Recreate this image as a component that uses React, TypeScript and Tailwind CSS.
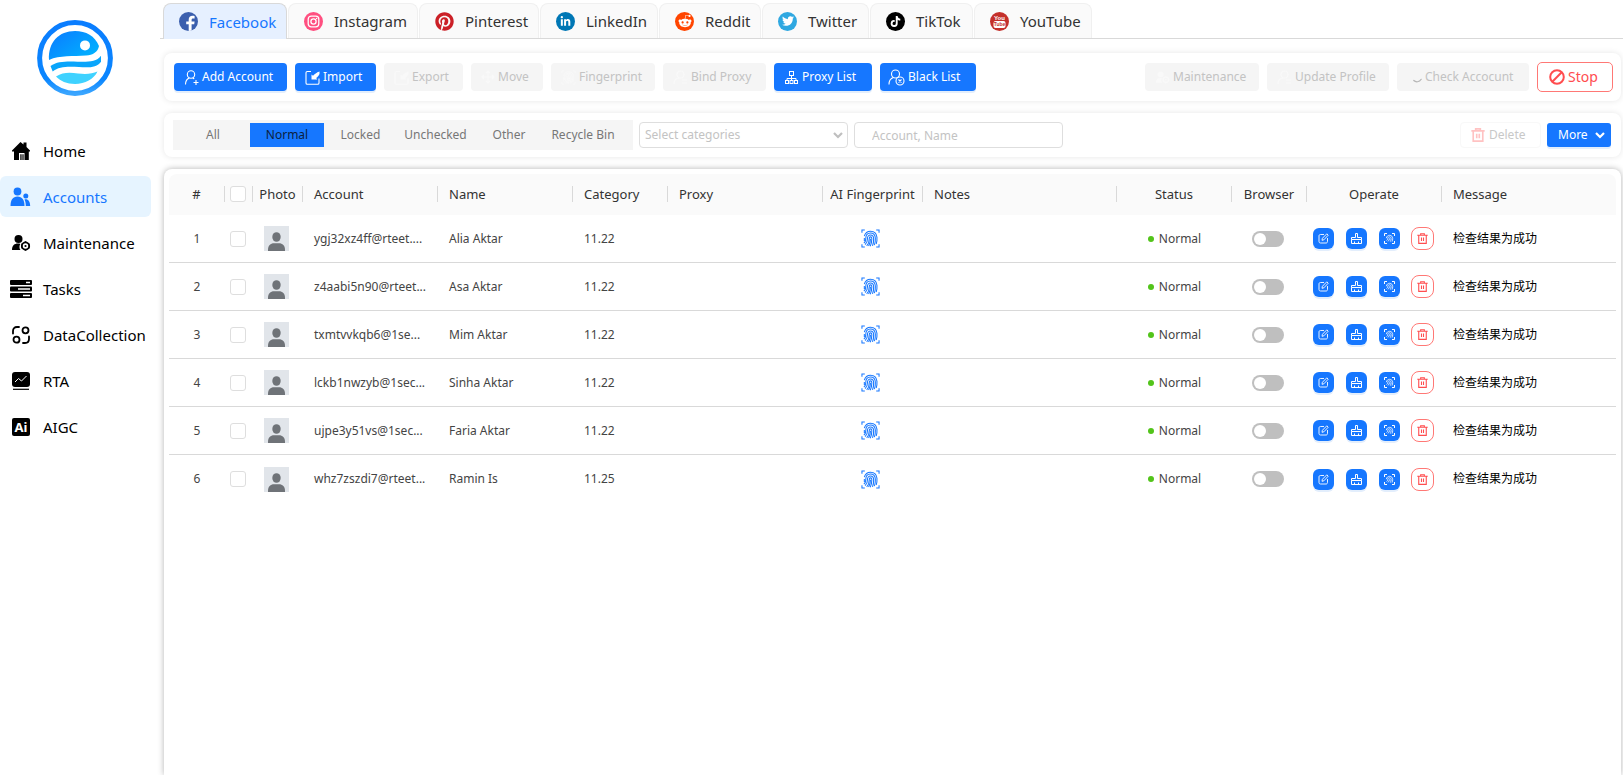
import type { ReactNode } from 'react'
import { FaLinkedinIn, FaPinterest, FaRedditAlien, FaTiktok, FaTwitter } from 'react-icons/fa'

/* ---------- icons ---------- */

function Logo() {
  return (
    <svg width="76" height="76" viewBox="0 0 76 76" aria-label="Logo">
      <defs>
        <linearGradient id="logo-ring" x1="0" y1="0" x2="0" y2="1">
          <stop offset="0" stopColor="#0a7dff" />
          <stop offset="0.8" stopColor="#0a86ff" />
          <stop offset="1" stopColor="#3aa5ff" />
        </linearGradient>
        <linearGradient id="logo-head" x1="0.1" y1="0.1" x2="1" y2="0.8">
          <stop offset="0" stopColor="#0a80ff" />
          <stop offset="1" stopColor="#00b4ff" />
        </linearGradient>
      </defs>
      <circle cx="38" cy="38" r="35.4" fill="#fff" stroke="url(#logo-ring)" strokeWidth="5" />
      <path d="M12 40C11 22 22 11 38 11c11 0 20 5 24 15-1 6-6 9-13 9.600-13 1.200-26-.6-37 4.400z" fill="url(#logo-head)" />
      <circle cx="48" cy="25.400" r="5" fill="#fff" />
      <path d="M13.500 46c7-5 17-4.500 27-4.300 10 .3 19 .3 23.500-6v6c-4 6-12 6-22 5.400-10-.6-20-1-26.300 4.400z" fill="#09a5fb" />
      <path d="M19 56.500c7-4.500 14-4 22-3 8 .8 14 .5 19.500-2C57 59 48 64 38 64c-8 0-15-3-19-7.500z" fill="#3fd2ff" />
    </svg>
  )
}

function HomeIcon() {
  return (
    <svg width="20" height="20" viewBox="0 0 20 20" fill="currentColor">
      <path d="M1 9.500 9.500 1l3 2.500V1.500h3v4.500l3.500 3.500v1h-1.200V19h-4.300v-7H8v7H3V10.500H1z" />
      <path d="M9.300 13.200h1.300V19H9.300zM11.400 13.200h1.200V19h-1.200z" />
    </svg>
  )
}

function AccountsIcon() {
  return (
    <svg width="21" height="20" viewBox="0 0 21 20" fill="currentColor">
      <circle cx="7.500" cy="4.500" r="3.900" />
      <path d="M.5 19c0-6 2.300-9.500 7-9.500s7 3.500 7 9.500z" />
      <circle cx="15.800" cy="9" r="2.500" />
      <path d="M14.500 12.500c3.500-.8 5.500 1.700 5.700 6.500h-4.400c0-2.500-.3-4.700-1.300-6.500z" />
    </svg>
  )
}

function MaintenanceIcon({ size = 20 }: { size?: number }) {
  return (
    <svg width={size} height={size} viewBox="0 0 20 20" fill="currentColor">
      <circle cx="7.500" cy="6" r="4" />
      <path d="M1 17c0-4.500 2.500-6.500 6-6.500 1 0 1.700.1 2.300.5-1.200 2-1.100 4.300.2 6z" />
      <path fillRule="evenodd" d="m14.500 8 2.300 1.200 2 1.600.3 2.200-.3 2.200-2 1.600-2.300 1.200-2.300-1.200-2-1.600-.3-2.200.3-2.200 2-1.600zm0 2.300a2.700 2.700 0 1 0 0 5.400 2.700 2.700 0 0 0 0-5.400z" />
      <circle cx="14.500" cy="13" r="1.100" />
    </svg>
  )
}

function TasksIcon() {
  return (
    <svg width="22" height="18" viewBox="0 0 22 18">
      <rect width="22" height="5" rx="1" y="0" />
      <rect width="22" height="5" rx="1" y="6.500" />
      <rect width="22" height="5" rx="1" y="13" />
      <path d="M16 2.500h4M8 9h12M13 15.500h7" stroke="#fff" strokeWidth="1.400" />
    </svg>
  )
}

function CollectionIcon() {
  return (
    <svg width="20" height="20" viewBox="0 0 20 20" fill="none" stroke="currentColor" strokeWidth="1.800">
      <circle cx="14.500" cy="5.300" r="3" />
      <circle cx="5.500" cy="14.700" r="3" />
      <path d="M2 8.500V6c0-2.500 1.500-4 4-4h2M18 11.500V14c0 2.500-1.500 4-4 4h-2" strokeLinecap="round" />
    </svg>
  )
}

function RtaIcon() {
  return (
    <svg width="20" height="20" viewBox="0 0 20 20">
      <rect x="1" y="1" width="18" height="15" rx="3" />
      <path d="M2 18.300h16" stroke="#000" strokeWidth="1.200" />
      <path d="m4 11 3.500-3.500L10.500 10l5-5" fill="none" stroke="#fff" strokeWidth="1" />
    </svg>
  )
}

function AigcIcon() {
  return (
    <svg width="18" height="18" viewBox="0 0 18 18">
      <rect width="18" height="18" rx="2" />
      <text x="9" y="14" textAnchor="middle" fontSize="13" fontWeight="700" fill="#fff" fontFamily="Noto Sans, sans-serif">Ai</text>
    </svg>
  )
}

function FacebookLogo() {
  return (
    <svg width="19" height="19" viewBox="0 0 19 19">
      <circle cx="9.500" cy="9.500" r="9.500" fill="#3b5fae" />
      <path d="M9.700 18.900v-6.700H7.200V9.600h2.500V7.700c0-2.700 1.500-4 3.800-4 1 0 1.900.1 2.100.2v2.500h-1.500c-1.200 0-1.500.6-1.500 1.500v1.700h3l-.4 2.600h-2.600v6.100c-.9.400-1.900.6-2.900.6z" fill="#fff" />
    </svg>
  )
}

function InstagramLogo() {
  return (
    <svg width="19" height="19" viewBox="0 0 19 19" fill="none" stroke="#fff" strokeWidth="1.300">
      <circle cx="9.500" cy="9.500" r="9.500" fill="#ff4f80" stroke="none" />
      <rect x="4.200" y="4.200" width="10.600" height="10.600" rx="3" />
      <circle cx="9.500" cy="9.500" r="2.600" />
      <circle cx="12.600" cy="6.400" r=".7" fill="#fff" stroke="none" />
    </svg>
  )
}

function YoutubeLogo() {
  return (
    <svg width="19" height="19" viewBox="0 0 19 19" fontFamily="Liberation Sans, sans-serif" fontWeight="700" textAnchor="middle">
      <circle cx="9.500" cy="9.500" r="9.500" fill="#c4302b" />
      <text x="9.500" y="8" fontSize="6" fill="#fff">You</text>
      <rect x="3.500" y="9" width="12" height="7" rx="2" fill="#fff" />
      <text x="9.500" y="14.300" fontSize="5" fill="#c4302b">Tube</text>
    </svg>
  )
}

function Disc({ className, children }: { className: string; children: ReactNode }) {
  return <span className={`flex size-[19px] items-center justify-center rounded-full text-white ${className}`}>{children}</span>
}

function AddUserIcon() {
  return (
    <svg width="15" height="15" viewBox="0 0 15 15" fill="none" stroke="currentColor" strokeWidth="1.100">
      <circle cx="7" cy="4.500" r="3.700" />
      <path d="M1.500 14.500c0-3.500 1.500-5.700 3.800-6.600M8.800 7.900c.6.300 1 .6 1.400 1.100M9.500 12.500h5M12 10v5" />
    </svg>
  )
}

function BlockUserIcon() {
  return (
    <svg width="17" height="17" viewBox="0 0 17 17" fill="none" stroke="currentColor" strokeWidth="1.100">
      <circle cx="7.500" cy="5" r="4" />
      <path d="M1 15.500c0-4 1.700-6 4.300-6.900" />
      <circle cx="12" cy="12" r="4" />
      <path d="m10.500 10.500 3 3M13.500 10.500l-3 3" />
    </svg>
  )
}

function ImportIcon() {
  return (
    <svg width="15" height="15" viewBox="0 0 15 15" fill="none" stroke="currentColor" strokeWidth="1.100">
      <path d="M6 1.500H2.300C1.400 1.500 1 1.900 1 2.700V13c0 .8.400 1.300 1.300 1.300h10.400c.8 0 1.300-.5 1.300-1.300V8.500" />
      <path d="M6.500 9.500V4.500l1.500 1.300c1.500-1.600 3.600-3.300 6.500-4.300v2.500c-.8 1.700-2 3-3.300 4.100l1 1.400z" fill="currentColor" stroke="none" />
    </svg>
  )
}

function MoveIcon() {
  return (
    <svg width="14" height="14" viewBox="0 0 14 14" fill="none" stroke="currentColor" strokeWidth="1.200">
      <path d="M7 1v12M1 7h12M5 3l2-2 2 2M5 11l2 2 2-2M3 5 1 7l2 2M11 5l2 2-2 2" />
    </svg>
  )
}

function NetworkIcon() {
  return (
    <svg width="15" height="15" viewBox="0 0 15 15" fill="none" stroke="currentColor" strokeWidth="1">
      <rect x="5.500" y="1.500" width="4" height="4" />
      <rect x="1.500" y="10.500" width="3" height="3" />
      <rect x="6" y="10.500" width="3" height="3" />
      <rect x="10.500" y="10.500" width="3" height="3" />
      <path d="M7.500 5.500v5M3 10.500v-2h9v2" />
    </svg>
  )
}

function FingerprintIcon({ size = 20 }: { size?: number }) {
  return (
    <svg width={size} height={size} viewBox="0 0 20 20" fill="none" stroke="currentColor" strokeWidth="1.100">
      <path d="M1 4V1h3M16 1h3v3M19 16v3h-3M4 19H1v-3" />
      <path d="M3.500 7.500C4.500 4 7 2.300 10 2.300c4 0 6.500 2.700 6.800 6.500.2 3-.1 5.200-.8 7" />
      <path d="M3.500 9.500v3.200M3 14.800c1.200-.8 2-2.300 2-4.600C5 6.600 7 4.300 10 4.300s5 2.200 5.100 5.500c.1 3-.2 5.200-1 7.200" />
      <path d="M4.300 16.500c1.700-1.500 2.500-3.500 2.500-6.300C6.800 7.800 8 6.300 10 6.300s3.200 1.500 3.300 3.900c.1 3-.3 5.300-1.200 7.600" />
      <path d="M6 17.800c1.900-2 2.700-4.200 2.700-7.500 0-1.300.5-2 1.300-2s1.400.8 1.400 2c0 3.200-.5 5.400-1.700 7.900" />
      <path d="M10 10.200c0 3-.6 5.200-2 7.800" />
    </svg>
  )
}

function ScanIcon() {
  return (
    <svg width="13" height="13" viewBox="0 0 13 13" fill="none" stroke="currentColor">
      <path d="M1.500 4V1.500H4M9 1.500h2.500V4M11.500 9v2.500H9M4 11.500H1.500V9" />
      <path d="M3.300 6.200c.4-1.900 1.600-2.900 3.200-2.900 2 0 3.200 1.300 3.200 3.200 0 1.300-.2 2.300-.6 3.100M3.600 8.600c.8-.6 1.100-1.300 1.200-2.200.1-1 .7-1.600 1.700-1.600s1.600.7 1.600 1.800c0 1.200-.3 2.200-.8 3M5 9.400c.9-.8 1.400-1.700 1.500-3" strokeWidth=".8" />
    </svg>
  )
}

function BindIcon() {
  return (
    <svg width="15" height="15" viewBox="0 0 15 15" fill="none" stroke="currentColor" strokeWidth="1.200">
      <circle cx="7.500" cy="4.500" r="3.500" />
      <path d="M1 14c0-3.500 2-5.500 5-6M9 10h5M9 13h5" />
    </svg>
  )
}

function StopIcon() {
  return (
    <svg width="16" height="16" viewBox="0 0 16 16" fill="none" stroke="currentColor" strokeWidth="2">
      <circle cx="8" cy="8" r="6.800" />
      <path d="M3.300 12.700 12.700 3.300" />
    </svg>
  )
}

function SpinnerIcon() {
  return (
    <svg width="9" height="14" viewBox="0 0 9 14" fill="none" stroke="#b5b5b5" strokeWidth="1.200" strokeLinecap="round">
      <path d="M.8 10.500c2 2 5.500 1.800 7.400-1.200" />
    </svg>
  )
}

function TrashIcon({ size = 11, strokeWidth = 1.2 }: { size?: number; strokeWidth?: number }) {
  return (
    <svg width={size} height={size} viewBox="0 0 12 12" fill="none" stroke="currentColor" strokeWidth={strokeWidth}>
      <path d="M.3 2.500h11.400M4 2.200V.8h4v1.400M1.900 2.500v8.800h8.200V2.500M4.900 5v3.800M7.100 5v3.800" />
    </svg>
  )
}

function ChevronIcon() {
  return (
    <svg width="10" height="10" viewBox="0 0 10 10" fill="none" stroke="currentColor" strokeWidth="2.200">
      <path d="m1 3 4 4 4-4" />
    </svg>
  )
}

function EditIcon() {
  return (
    <svg width="11" height="11" viewBox="0 0 11 11" fill="none" stroke="currentColor" strokeWidth=".9">
      <path d="M6 1.500H2.600C1.500 1.500 1 2 1 3v5.400c0 1 .5 1.600 1.600 1.600H8c1 0 1.500-.6 1.500-1.600V5" />
      <path d="m4 7.300.4-2L8.800.8l1.400 1.400-4.300 4.600z" />
    </svg>
  )
}

function CleanIcon() {
  return (
    <svg width="13" height="13" viewBox="0 0 13 13" fill="none" stroke="currentColor" strokeWidth="1">
      <path d="M5.500 5.500v-4h2v4h4v2h-10v-2zM1.500 7.500v4h10v-4M4.500 11.500v-2M8.500 11.500v-2" />
    </svg>
  )
}

function Avatar() {
  return (
    <svg width="25" height="25" viewBox="0 0 25 25" role="img" aria-label="Profile photo">
      <rect width="25" height="25" fill="#e1e5ea" />
      <ellipse cx="12.500" cy="11" rx="4.200" ry="4.800" fill="#6f7378" />
      <path d="M4 25v-1.500c0-4 2.500-6.300 6-6.300h5c3.500 0 6 2.300 6 6.300V25z" fill="#6f7378" />
    </svg>
  )
}

/* ---------- data ---------- */

const navItems = [
  { label: 'Home', icon: <HomeIcon /> },
  { label: 'Accounts', icon: <AccountsIcon />, active: true },
  { label: 'Maintenance', icon: <MaintenanceIcon /> },
  { label: 'Tasks', icon: <TasksIcon /> },
  { label: 'DataCollection', icon: <CollectionIcon /> },
  { label: 'RTA', icon: <RtaIcon /> },
  { label: 'AIGC', icon: <AigcIcon /> }
]

const platforms = [
  { label: 'Facebook', width: 'w-[124px]', icon: <FacebookLogo />, active: true },
  { label: 'Instagram', width: 'w-[130px]', icon: <InstagramLogo /> },
  { label: 'Pinterest', width: 'w-[120px]', icon: <FaPinterest size={19} color="#cb2027" /> },
  { label: 'LinkedIn', width: 'w-[118px]', icon: <Disc className="bg-[#0077b5]"><FaLinkedinIn size={11} /></Disc> },
  { label: 'Reddit', width: 'w-[102px]', icon: <Disc className="bg-[#ff4500]"><FaRedditAlien size={14} /></Disc> },
  { label: 'Twitter', width: 'w-[107px]', icon: <Disc className="bg-[#2fa8e1]"><FaTwitter size={12} /></Disc> },
  { label: 'TikTok', width: 'w-[103px]', icon: <Disc className="bg-black"><FaTiktok size={11} /></Disc> },
  { label: 'YouTube', width: 'w-[118px]', icon: <YoutubeLogo /> }
]

const filters = [
  { label: 'All', width: 'w-[74px]' },
  { label: 'Normal', width: 'w-[74px]', active: true },
  { label: 'Locked', width: 'w-[73px]' },
  { label: 'Unchecked', width: 'w-[77px]' },
  { label: 'Other', width: 'w-[70px]' },
  { label: 'Recycle Bin', width: 'w-[78px]' }
]

const columns = [
  { label: '#', width: 'w-[56px]', align: 'text-center' },
  { label: '', width: 'w-[28px]', align: 'pr-[2px]' },
  { label: 'Photo', width: 'w-[50px]', align: 'text-center' },
  { label: 'Account', width: 'w-[135px]', align: 'text-left pl-[11px]' },
  { label: 'Name', width: 'w-[135px]', align: 'text-left pl-[11px]' },
  { label: 'Category', width: 'w-[95px]', align: 'text-left pl-[11px]' },
  { label: 'Proxy', width: 'w-[155px]', align: 'text-left pl-[11px]' },
  { label: 'AI Fingerprint', width: 'w-[100px]', align: 'text-center' },
  { label: 'Notes', width: 'w-[194px]', align: 'text-left pl-[11px]' },
  { label: 'Status', width: 'w-[115px]', align: 'text-center' },
  { label: 'Browser', width: 'w-[75px]', align: 'text-center' },
  { label: 'Operate', width: 'w-[135px]', align: 'text-center' },
  { label: 'Message', width: 'w-auto', align: 'text-left pl-[11px]' }
]

const accounts = [
  { id: 1, account: 'ygj32xz4ff@rteet....', name: 'Alia Aktar', category: '11.22' },
  { id: 2, account: 'z4aabi5n90@rteet...', name: 'Asa Aktar', category: '11.22' },
  { id: 3, account: 'txmtvvkqb6@1se...', name: 'Mim Aktar', category: '11.22' },
  { id: 4, account: 'lckb1nwzyb@1sec...', name: 'Sinha Aktar', category: '11.22' },
  { id: 5, account: 'ujpe3y51vs@1sec...', name: 'Faria Aktar', category: '11.22' },
  { id: 6, account: 'whz7zszdi7@rteet...', name: 'Ramin Is', category: '11.25' }
]

/* ---------- parts ---------- */

const buttonStyles = {
  primary: 'bg-[#1677ff] text-white shadow-[0_2px_0_#e3eefc]',
  disabled: 'bg-[#f5f5f5] text-[#c3c3c3]'
}

type ToolButtonProps = {
  width: string
  icon: ReactNode
  children: ReactNode
  disabled?: boolean
  padding?: string
}

function ToolButton({ width, icon, children, disabled = false, padding = 'pl-[10px]' }: ToolButtonProps) {
  return (
    <button
      type="button"
      disabled={disabled}
      className={`flex h-7 shrink-0 items-center gap-[3px] rounded-[4px] whitespace-nowrap ${padding} ${width} ${disabled ? buttonStyles.disabled : buttonStyles.primary}`}
    >
      {disabled ? <span className="text-[#f9f9f9]">{icon}</span> : icon}
      {children}
    </button>
  )
}

function CheckBox({ label }: { label: string }) {
  return (
    <input
      type="checkbox"
      aria-label={label}
      className="mx-auto block size-4 appearance-none rounded-[3px] border border-[#dedede] bg-white checked:bg-[#1677ff]"
    />
  )
}

function RowAction({ label, children }: { label: string; children: ReactNode }) {
  return (
    <button type="button" aria-label={label} className="flex size-[21px] items-center justify-center rounded-md bg-[#1677ff] text-white shadow-[0_2px_0_#e3eefc]">
      {children}
    </button>
  )
}

function Sidebar() {
  return (
    <aside className="w-[151px] shrink-0">
      <div className="flex justify-center pt-5 pr-[2px]">
        <Logo />
      </div>
      <nav className="mt-[34px] flex flex-col gap-[5px]">
        {navItems.map((item) => (
          <a
            key={item.label}
            href="#"
            className={`flex h-[41px] items-center gap-[2px] rounded-md text-[15px] ${item.active ? 'bg-[#e6f4ff] text-[#1677ff]' : 'text-black'}`}
          >
            <span className="flex w-[41px] shrink-0 justify-center">{item.icon}</span>
            {item.label}
          </a>
        ))}
      </nav>
    </aside>
  )
}

function PlatformTabs() {
  return (
    <div role="tablist" className="mt-[3px] flex h-9 gap-px border-b border-[#d9d9d9] pl-[3px]">
      {platforms.map((platform) => (
        <button
          key={platform.label}
          type="button"
          role="tab"
          aria-selected={Boolean(platform.active)}
          className={`flex shrink-0 items-center gap-[11px] rounded-t-lg border border-b-0 pl-[15px] text-[15px] ${platform.width} ${
            platform.active ? '-mb-px border-[#d9d9d9] bg-[#e6f0ff] text-[#1677ff]' : 'border-[#f0f0f0] bg-[#fafafa] text-[#333]'
          }`}
        >
          {platform.icon}
          {platform.label}
        </button>
      ))}
    </div>
  )
}

function ActionBar() {
  return (
    <section className="mt-[14px] mr-[2px] ml-1 flex h-12 items-center gap-2 rounded-lg bg-white pr-2 pl-[10px] shadow-[0_0_6px_rgba(0,0,0,0.1)]">
      <ToolButton width="w-[113px]" icon={<AddUserIcon />}>Add Account</ToolButton>
      <ToolButton width="w-[81px]" icon={<ImportIcon />}>Import</ToolButton>
      <ToolButton width="w-[79px]" icon={<ImportIcon />} disabled>Export</ToolButton>
      <ToolButton width="w-[72px]" icon={<MoveIcon />} disabled>Move</ToolButton>
      <ToolButton width="w-[104px]" icon={<FingerprintIcon size={15} />} disabled>Fingerprint</ToolButton>
      <ToolButton width="w-[103px]" icon={<BindIcon />} disabled>Bind Proxy</ToolButton>
      <ToolButton width="w-[98px]" icon={<NetworkIcon />}>Proxy List</ToolButton>
      <ToolButton width="w-[96px]" icon={<BlockUserIcon />} padding="pl-2">Black List</ToolButton>
      <div className="ml-auto flex items-center gap-2">
        <ToolButton width="w-[114px]" icon={<MaintenanceIcon size={15} />} disabled>Maintenance</ToolButton>
        <ToolButton width="w-[122px]" icon={<BindIcon />} disabled>Update Profile</ToolButton>
        <ToolButton width="w-[132px]" icon={<SpinnerIcon />} padding="pl-4" disabled>Check Accocunt</ToolButton>
        <button type="button" className="flex h-[30px] w-[76px] items-center gap-[3px] rounded-[5px] border border-[#ff7875] bg-white pl-[11px] text-[14px] text-[#ff4d4f]">
          <StopIcon />
          Stop
        </button>
      </div>
    </section>
  )
}

function FilterBar() {
  return (
    <section className="mt-3 mr-[2px] ml-1 flex h-11 items-center rounded-lg bg-white pr-[10px] pl-[9px] shadow-[0_0_6px_rgba(0,0,0,0.1)]">
      <div className="flex h-[30px] w-[460px] shrink-0 items-center bg-[#f5f5f5] pl-[3px]">
        {filters.map((filter) => (
          <button
            key={filter.label}
            type="button"
            className={`h-6 whitespace-nowrap ${filter.width} ${filter.active ? 'bg-[#1677ff] text-[#0b1f40]' : 'text-[#777]'}`}
          >
            {filter.label}
          </button>
        ))}
      </div>
      <div className="relative ml-[6px] w-[209px] shrink-0 text-[#bfbfbf]">
        <select aria-label="Select categories" defaultValue="" className="h-[26px] w-full appearance-none rounded-[4px] border border-[#dedede] bg-white pl-[5px] text-[12px] text-[#c3c3c3]">
          <option value="">Select categories</option>
          <option value="11.22">11.22</option>
          <option value="11.25">11.25</option>
        </select>
        <span className="pointer-events-none absolute top-2 right-[5px]">
          <ChevronIcon />
        </span>
      </div>
      <input
        type="text"
        aria-label="Account, Name"
        placeholder="Account, Name"
        className="ml-[6px] h-[26px] w-[209px] shrink-0 rounded-[4px] border border-[#dedede] bg-white px-[17px] text-[12px] placeholder:text-[#c3c3c3]"
      />
      <div className="ml-auto flex items-center gap-[6px]">
        <button type="button" disabled className="flex h-[26px] w-[81px] items-center gap-1 rounded-[4px] border border-[#f8f8f8] pl-[10px] text-[#c8c8c8]">
          <span className="text-[#ffc2c2]">
            <TrashIcon size={14} strokeWidth={1.4} />
          </span>
          Delete
        </button>
        <button type="button" className="flex h-6 w-16 items-center justify-between rounded-[3px] bg-[#1677ff] pr-[6px] pl-[11px] text-white shadow-[0_2px_0_#e3eefc]">
          More
          <ChevronIcon />
        </button>
      </div>
    </section>
  )
}

function AccountTable() {
  return (
    <section className="mt-3 mr-[2px] ml-1 flex-1 rounded-t-lg bg-white px-[5px] pt-[5px] shadow-[0_0_6px_rgba(0,0,0,0.3)]">
      <table className="w-full table-fixed border-separate border-spacing-0">
        <thead>
          <tr className="text-[13px] text-[#333]">
            {columns.map((column, index) => (
              <th
                key={column.label || 'select'}
                className={`h-[41px] bg-[#fafafa] p-0 pb-[2px] font-normal whitespace-nowrap first:rounded-tl-lg last:rounded-tr-lg ${column.width}`}
              >
                <div className={`h-4 leading-4 ${column.align} ${index < columns.length - 1 ? 'border-r border-[#d9d9d9]' : ''}`}>
                  {column.label || <CheckBox label="Select all accounts" />}
                </div>
              </th>
            ))}
          </tr>
        </thead>
        <tbody>
          {accounts.map((row) => (
            <tr key={row.id} className="text-[#444] last:[&>td]:border-b-0 [&>td]:h-12 [&>td]:border-b [&>td]:border-[#d9d9d9] [&>td]:p-0">
              <td className="text-center">{row.id}</td>
              <td><div className="pr-[3px]"><CheckBox label={`Select ${row.name}`} /></div></td>
              <td><div className="flex justify-center pr-[3px]"><Avatar /></div></td>
              <td><div className="pl-[11px] whitespace-nowrap">{row.account}</div></td>
              <td><div className="pl-[11px]">{row.name}</div></td>
              <td><div className="pl-[11px]">{row.category}</div></td>
              <td />
              <td className="text-[#1677ff]">
                <div className="flex justify-center pr-[5px]"><FingerprintIcon size={19} /></div>
              </td>
              <td />
              <td>
                <div className="flex items-center justify-center gap-[5px]">
                  <span className="size-[6px] rounded-full bg-[#52c41a]" />
                  Normal
                </div>
              </td>
              <td>
                <div className="pr-[3px]">
                  <input
                    type="checkbox"
                    role="switch"
                    aria-label={`Open browser for ${row.name}`}
                    className="mx-auto flex h-4 w-8 appearance-none items-center rounded-full bg-[#bfbfbf] px-[2px] before:size-3 before:rounded-full before:bg-white checked:justify-end checked:bg-[#1677ff]"
                  />
                </div>
              </td>
              <td>
                <div className="flex items-center gap-3 pl-[6px]">
                  <RowAction label="Edit"><EditIcon /></RowAction>
                  <RowAction label="Clean"><CleanIcon /></RowAction>
                  <RowAction label="Fingerprint"><ScanIcon /></RowAction>
                  <button type="button" aria-label="Delete" className="-ml-px flex size-[23px] items-center justify-center rounded-lg border border-[#ff7875] text-[#ff4d4f]">
                    <TrashIcon />
                  </button>
                </div>
              </td>
              <td><div className="pl-[11px] text-black">检查结果为成功</div></td>
            </tr>
          ))}
        </tbody>
      </table>
    </section>
  )
}

export default function App() {
  return (
    <div className="flex min-h-screen overflow-hidden bg-white font-['Noto_Sans','Noto_Sans_CJK_SC',sans-serif] text-[12px] leading-4">
      <Sidebar />
      <main className="ml-[9px] flex min-w-0 flex-1 flex-col">
        <PlatformTabs />
        <ActionBar />
        <FilterBar />
        <AccountTable />
      </main>
    </div>
  )
}
